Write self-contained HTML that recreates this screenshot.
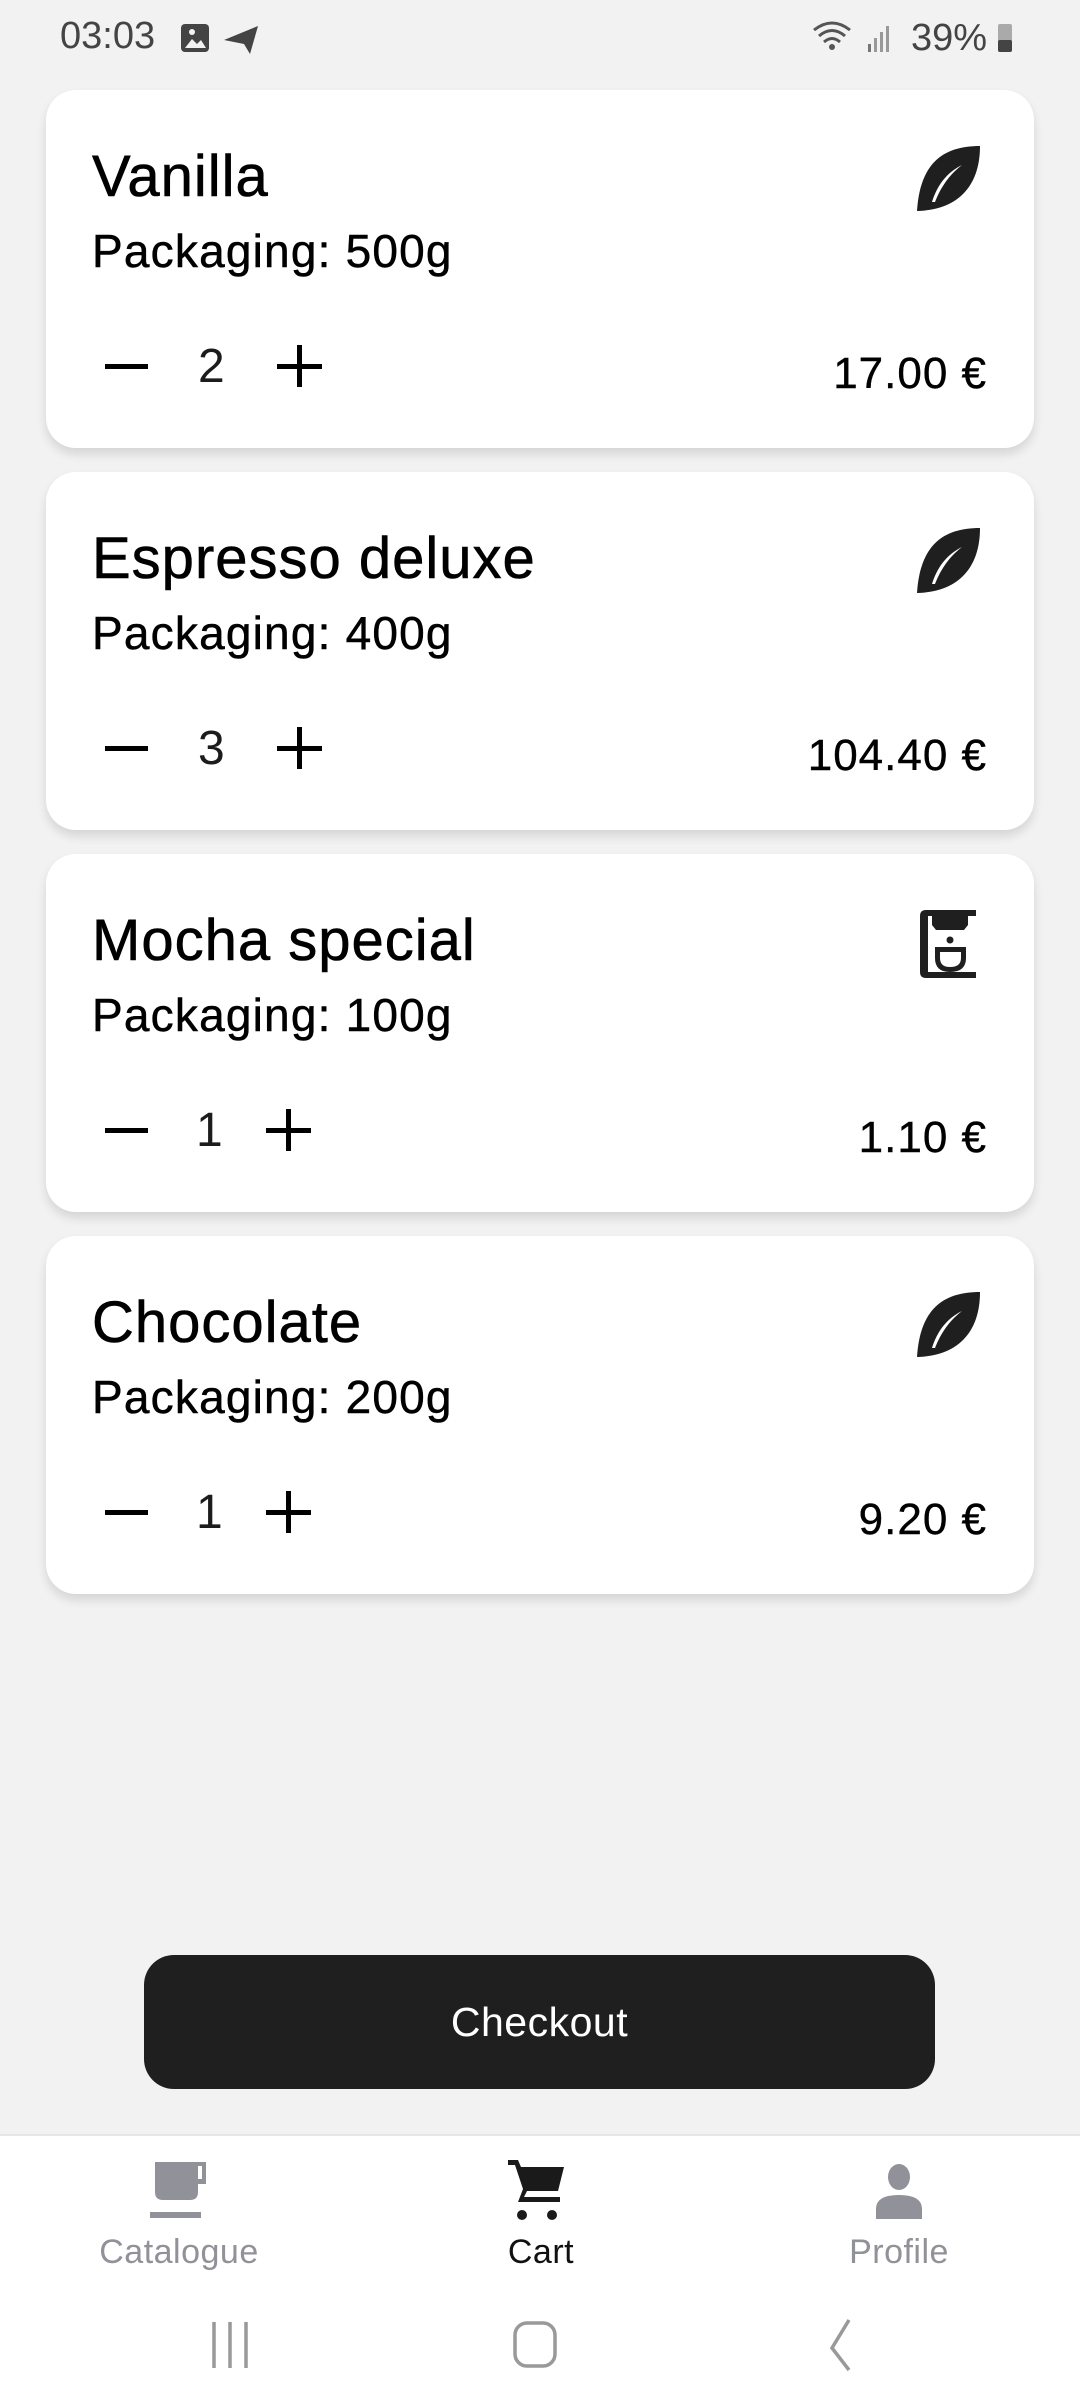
<!DOCTYPE html>
<html><head><meta charset="utf-8">
<style>
*{margin:0;padding:0;box-sizing:border-box}
body{width:1080px;height:2408px;background:#f2f2f2;font-family:"Liberation Sans",sans-serif;position:relative;overflow:hidden;color:#000}
.abs{position:absolute}
.card{position:absolute;left:46px;width:988px;height:358px;background:#fff;border-radius:30px;box-shadow:0 6px 10px rgba(0,0,0,0.12)}
.title{position:absolute;left:46px;top:52px;font-size:58px;line-height:70px;white-space:nowrap;letter-spacing:1px;-webkit-text-stroke:0.6px #000}
.pack{position:absolute;left:46px;top:133px;font-size:46px;line-height:56px;white-space:nowrap;letter-spacing:1.2px;-webkit-text-stroke:0.5px #000}
.minus{position:absolute;left:59px;top:274px;width:43px;height:5px;background:#000}
.qty{position:absolute;top:249px;font-size:48px;line-height:56px;color:#1c1c1c}
.plus{position:absolute;top:255px;width:45px;height:42px}
.plus:before{content:"";position:absolute;left:0;top:19px;width:45px;height:5px;background:#000}
.plus:after{content:"";position:absolute;left:20px;top:0;width:5px;height:42px;background:#000}
.price{position:absolute;right:47px;top:258px;font-size:44px;line-height:52px;white-space:nowrap;letter-spacing:1px;-webkit-text-stroke:0.4px #000}
.icon{position:absolute;left:870px;top:56px}
.lab{position:absolute;top:2232px;font-size:34px;line-height:40px;color:#919199;transform:translateX(-50%);letter-spacing:0.5px}
</style></head><body>
<div class="abs" style="left:60px;top:14px;font-size:38px;line-height:44px;color:#444">03:03</div>
<svg class="abs" style="left:180px;top:22px" width="82" height="34" viewBox="0 0 82 34"><rect x="1" y="2" width="28" height="28" rx="4" fill="#444"/><path d="M5 26 L12 17 L17 22 L21 18 L26 26Z" fill="#f2f2f2"/><circle cx="12" cy="10" r="3" fill="#f2f2f2"/><path d="M44 18 L78 4 L70 32 L64 22 Z" fill="#444"/></svg>
<div class="abs" style="left:810px;top:16px;width:220px;height:40px">
<svg width="220" height="40" viewBox="0 0 220 40"><path d="M4 14 Q22 0 40 14 M9 20 Q22 9 35 20 M14 26 Q22 19 30 26" stroke="#555" stroke-width="3" fill="none"/><circle cx="22" cy="31" r="3" fill="#555"/><rect x="58" y="28" width="3" height="8" fill="#777"/><rect x="64" y="22" width="3" height="14" fill="#999"/><rect x="70" y="16" width="3" height="20" fill="#999"/><rect x="76" y="10" width="3" height="26" fill="#999"/><rect x="188" y="8" width="14" height="28" rx="2" fill="#aaa"/><rect x="188" y="24" width="14" height="12" rx="2" fill="#444"/></svg>
<div class="abs" style="left:101px;top:0;font-size:38px;line-height:44px;color:#444">39%</div>
</div>

<svg width="0" height="0" style="position:absolute"><defs>
<symbol id="leaf" viewBox="0 0 64 65"><path d="M64 0 C26 0 4 18 1 65 C40 64 64 42 64 0Z" fill="#1f1f1f"/><path d="M46 19 C30 27 21 40 16 56 L19 56 C25 41 33 29 46 19Z" fill="#fff"/></symbol>
</defs></svg>

<div class="card" style="top:90px">
<div class="title">Vanilla</div><div class="pack">Packaging: 500g</div>
<div class="minus"></div><div class="qty" style="left:152px">2</div><div class="plus" style="left:231px"></div>
<div class="price">17.00 €</div>
<svg class="icon" width="64" height="65"><use href="#leaf"/></svg>
</div>
<div class="card" style="top:472px">
<div class="title">Espresso deluxe</div><div class="pack">Packaging: 400g</div>
<div class="minus"></div><div class="qty" style="left:152px">3</div><div class="plus" style="left:231px"></div>
<div class="price">104.40 €</div>
<svg class="icon" width="64" height="65"><use href="#leaf"/></svg>
</div>
<div class="card" style="top:854px">
<div class="title">Mocha special</div><div class="pack">Packaging: 100g</div>
<div class="minus"></div><div class="qty" style="left:150px">1</div><div class="plus" style="left:220px"></div>
<div class="price">1.10 €</div>
<svg class="abs" style="left:872px;top:54px" width="58" height="72" viewBox="0 0 58 72"><path d="M4 2 H58 V8 H10 V64 H58 V70 H8 Q2 70 2 64 V8 Q2 2 8 2Z" fill="#1f1f1f"/><path d="M14 8 H50 V17 L46 22 H18 L14 17Z" fill="#1f1f1f"/><circle cx="32" cy="32" r="3.5" fill="#1f1f1f"/><path d="M17 39 H48 V50 Q48 64 32 64 Q17 64 17 50Z M22 44 V50 Q22 59 32 59 Q43 59 43 50 V44Z" fill="#1f1f1f" fill-rule="evenodd"/></svg>
</div>
<div class="card" style="top:1236px">
<div class="title">Chocolate</div><div class="pack">Packaging: 200g</div>
<div class="minus"></div><div class="qty" style="left:150px">1</div><div class="plus" style="left:220px"></div>
<div class="price">9.20 €</div>
<svg class="icon" width="64" height="65"><use href="#leaf"/></svg>
</div>

<div class="abs" style="left:144px;top:1955px;width:791px;height:134px;background:#1f1f1f;border-radius:30px;color:#fff;font-size:41px;line-height:134px;text-align:center;letter-spacing:0.5px">Checkout</div>

<div class="abs" style="left:0;top:2134px;width:1080px;height:274px;background:#fff;border-top:2px solid #e6e6e6"></div>
<svg class="abs" style="left:150px;top:2162px" width="60" height="56" viewBox="0 0 60 56"><path d="M5 0 H56 V22 H48 V30 Q48 38 40 38 H13 Q5 38 5 30Z" fill="#919199"/><rect x="48" y="4" width="4" height="13" fill="#fff"/><rect x="0" y="50" width="51" height="6" fill="#919199"/></svg>
<svg class="abs" style="left:508px;top:2159px" width="58" height="62" viewBox="0 0 58 62"><path d="M0 1 H10 L13 8 H56 L50 32 H19 L16 38 H52 V43 H10 L15 30 L7 6 H0Z" fill="#1a1a1a"/><circle cx="14" cy="56" r="5" fill="#1a1a1a"/><circle cx="44" cy="56" r="5" fill="#1a1a1a"/></svg>
<svg class="abs" style="left:875px;top:2163px" width="48" height="56" viewBox="0 0 48 56"><ellipse cx="24" cy="14" rx="11" ry="13" fill="#919199"/><path d="M1 56 V46 Q1 32 24 32 Q47 32 47 46 V56Z" fill="#919199"/></svg>
<div class="lab" style="left:179px">Catalogue</div>
<div class="lab" style="left:541px;color:#111">Cart</div>
<div class="lab" style="left:899px">Profile</div>

<svg class="abs" style="left:205px;top:2318px" width="680" height="55" viewBox="0 0 680 55"><g stroke="#999" stroke-width="3.5" fill="none"><path d="M9 4 V50 M25 4 V50 M41 4 V50"/><rect x="310" y="5" width="40" height="43" rx="12"/><path d="M644 2 L627 30 L644 52"/></g></svg>
</body></html>
